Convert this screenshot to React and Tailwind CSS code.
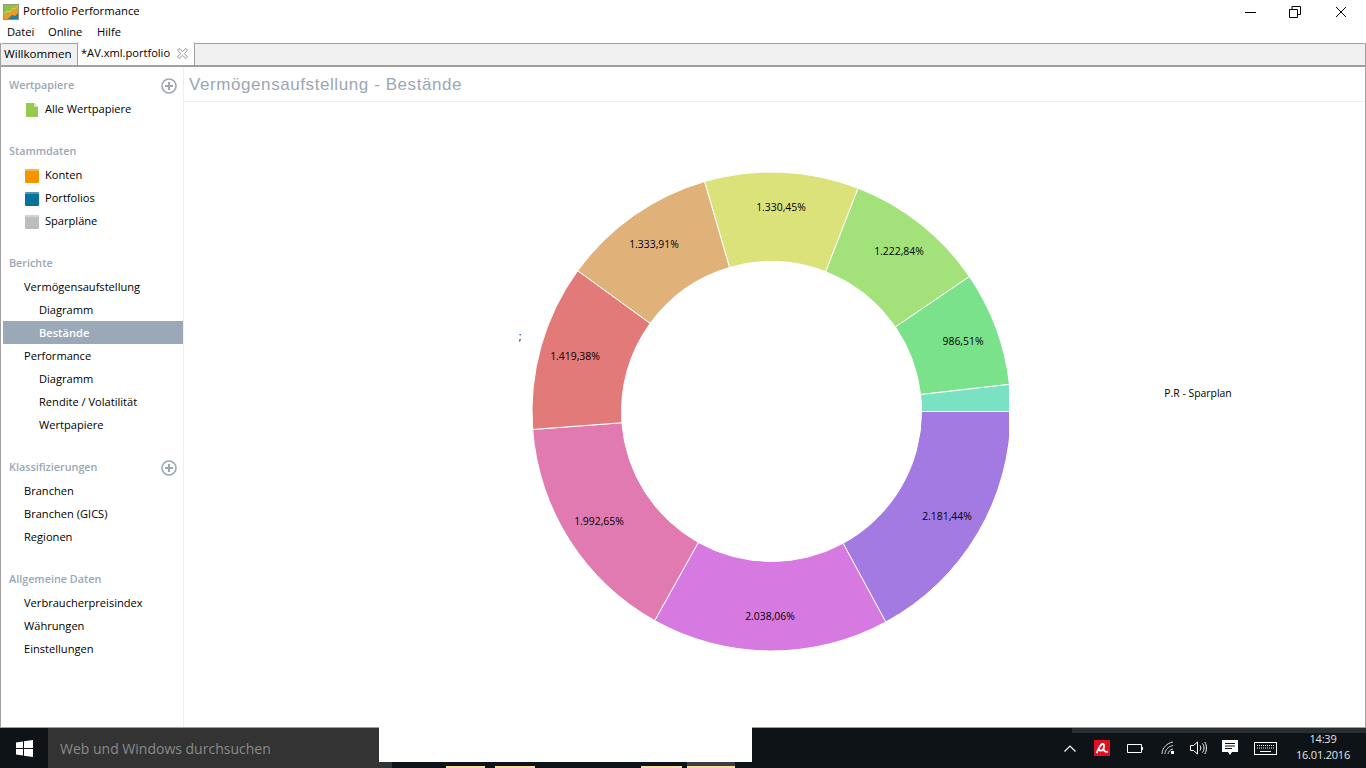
import React from "react";

const FONT = "font-['Open_Sans','Noto_Sans',sans-serif]";

function polar(r, deg) {
  const a = (deg * Math.PI) / 180;
  return [771.5 + r * Math.cos(a), 411.5 + r * Math.sin(a)];
}
function slice(a0, a1) {
  const R = 239.5, r = 150;
  const [x0, y0] = polar(R, a0), [x1, y1] = polar(R, a1), [x2, y2] = polar(r, a1), [x3, y3] = polar(r, a0);
  const large = a1 - a0 > 180 ? 1 : 0;
  return `M${x0} ${y0}A${R} ${R} 0 ${large} 1 ${x1} ${y1}L${x2} ${y2}A${r} ${r} 0 ${large} 0 ${x3} ${y3}Z`;
}
const SLICES = [
  [0, 61.5, "#a37ae2", "2.181,44%", 947, 520],
  [61.5, 119.2, "#d67ae2", "2.038,06%", 770, 620],
  [119.2, 175.7, "#e27ab2", "1.992,65%", 599, 525],
  [175.7, 216, "#e27a7a", "1.419,38%", 575, 360],
  [216, 253.8, "#e0b27a", "1.333,91%", 654, 248],
  [253.8, 291.2, "#dbe27a", "1.330,45%", 781, 211],
  [291.2, 325.7, "#a3e27a", "1.222,84%", 899, 255],
  [325.7, 353.5, "#7ae28b", "986,51%", 963, 345],
  [353.5, 360, "#7ae2c3", "", 0, 0],
];

function Donut() {
  return (
    <svg viewBox="184 102 1181 625" className="block h-full w-full">
      <defs>
        <clipPath id="chartClip">
          <rect x="184" y="102" width="825" height="625" />
        </clipPath>
      </defs>
      <g clipPath="url(#chartClip)">
        {SLICES.map((s) => (
          <path key={s[2]} d={slice(s[0], s[1])} fill={s[2]} stroke="#ffffff" strokeWidth="1" />
        ))}
      </g>
      <g fontFamily="'Open Sans','Noto Sans',sans-serif" fontSize="10.4" fill="#000000" textAnchor="middle">
        {SLICES.filter((s) => s[3]).map((s) => (
          <text key={s[3]} x={s[4]} y={s[5]}>{s[3]}</text>
        ))}
        <text x="1198" y="397">P.R - Sparplan</text>
        <text x="520" y="340">;</text>
      </g>
    </svg>
  );
}

function Doc({ color }) {
  return (
    <svg width="12" height="14" viewBox="0 0 12 14" className="ml-[1px] mr-[1px] shrink-0">
      <path d="M0 0H8L12 4V14H0Z" fill={color} />
      <path d="M8 0L12 4H8Z" fill="#d5e8a8" />
    </svg>
  );
}
function Book({ color, top }) {
  return (
    <span className="block h-[14px] w-[14px] shrink-0 rounded-[1px] border-t-2" style={{ backgroundColor: color, borderColor: top }} />
  );
}
function Plus() {
  return (
    <svg width="16" height="16" viewBox="0 0 16 16" className="shrink-0">
      <circle cx="8" cy="8" r="7" fill="none" stroke="#9aa7b5" strokeWidth="1.6" />
      <path d="M8 4V12M4 8H12" stroke="#9aa7b5" strokeWidth="2" />
    </svg>
  );
}

function Heading({ children, plus, className = "" }) {
  return (
    <div className={`mb-[1px] flex h-[23px] items-center justify-between pl-[8px] pr-[6px] ${className}`}>
      <span className="text-[10.8px] font-semibold text-[#9aa7b5]">{children}</span>
      {plus && <Plus />}
    </div>
  );
}
function Item({ children, icon, level = 1, active }) {
  const pad = icon ? "pl-[24px] gap-[6px]" : level === 2 ? "pl-[38px]" : "pl-[23px]";
  return (
    <div className={`flex h-[23px] items-center text-[11.1px] ${pad} ${active ? "-mt-[1px] mb-[1px] ml-[2px] !pl-[36px] pt-[2px] bg-[#9aa8b7] font-semibold text-white" : "text-black"}`}>
      {icon}
      <span>{children}</span>
    </div>
  );
}

function Sidebar() {
  return (
    <aside className="w-[183px] shrink-0 border-r border-[#eeeeee] pt-[7px]">
      <Heading plus>Wertpapiere</Heading>
      <Item icon={<Doc color="#95c94f" />}>Alle Wertpapiere</Item>
      <Heading className="mt-[19px]">Stammdaten</Heading>
      <Item icon={<Book color="#f79400" top="#fbb44c" />}>Konten</Item>
      <Item icon={<Book color="#05739a" top="#4a9ab8" />}>Portfolios</Item>
      <Item icon={<Book color="#bdbdbd" top="#d2d2d2" />}>Sparpläne</Item>
      <Heading className="mt-[19px]">Berichte</Heading>
      <Item>Vermögensaufstellung</Item>
      <Item level={2}>Diagramm</Item>
      <Item level={2} active>Bestände</Item>
      <Item>Performance</Item>
      <Item level={2}>Diagramm</Item>
      <Item level={2}>Rendite / Volatilität</Item>
      <Item level={2}>Wertpapiere</Item>
      <Heading plus className="mt-[19px]">Klassifizierungen</Heading>
      <Item>Branchen</Item>
      <Item>Branchen (GICS)</Item>
      <Item>Regionen</Item>
      <Heading className="mt-[19px]">Allgemeine Daten</Heading>
      <Item>Verbraucherpreisindex</Item>
      <Item>Währungen</Item>
      <Item>Einstellungen</Item>
    </aside>
  );
}

function Logo() {
  return (
    <svg width="16" height="16" viewBox="0 0 16 16" className="shrink-0">
      <rect width="16" height="16" fill="#8c9a78" />
      <rect x="1" y="1" width="14" height="14" fill="#8fc04a" />
      <path d="M1 15V11L4 8L7 9L10 5L12 6L15 2V15Z" fill="#f29a1f" />
      <path d="M5 15L9 11L12 12L15 9V15Z" fill="#1f7fa6" />
      <path d="M1 10L4 7L7 8L10 4L12 5L15 1" fill="none" stroke="#e6d24a" strokeWidth="1" />
    </svg>
  );
}

function TitleBar() {
  return (
    <div className="flex h-[22px] items-center bg-white pl-[3px] pt-[1px] text-[11.3px] text-black">
      <Logo />
      <span className="ml-[4px]">Portfolio Performance</span>
      <div className="ml-auto flex items-center">
        <svg width="12" height="12" viewBox="0 0 12 12" className="mr-[33px]"><path d="M1 6.5H12" stroke="#000" /></svg>
        <svg width="12" height="12" viewBox="0 0 12 12" className="mr-[34px]">
          <path d="M0.5 3.5H8.5V11.5H0.5ZM3 3.5V0.5H11.5V8.5H8.5" fill="none" stroke="#000" />
        </svg>
        <svg width="12" height="12" viewBox="0 0 12 12" className="mr-[19px]"><path d="M1 1L11 11M11 1L1 11" stroke="#000" /></svg>
      </div>
    </div>
  );
}

function TabBar() {
  return (
    <div className="flex h-[24px] shrink-0 items-end rounded-t-[2px] border-b-2 border-t border-[#a0a0a0] bg-[#f0f0f0] text-black">
      <div className="flex h-[22px] w-[76px] items-center pl-[3px] text-[11.6px]">Willkommen</div>
      <div className="flex h-[23px] w-[118px] items-center justify-between rounded-t-[2px] border-x border-[#a0a0a0] bg-white pl-[3px] pr-[6px] text-[11.1px]">
        <span>*AV.xml.portfolio</span>
        <svg width="11" height="11" viewBox="0 0 11 11" className="shrink-0">
          <path d="M0.5 2L2 0.5L5.5 3.5L9 0.5L10.5 2L7.5 5.5L10.5 9L9 10.5L5.5 7.5L2 10.5L0.5 9L3.5 5.5Z" fill="#ffffff" stroke="#8a8a8a" strokeWidth="0.9" />
        </svg>
      </div>
    </div>
  );
}

function Tray() {
  return (
    <div className="relative -ml-[8px] flex h-full items-center text-white">
      <svg width="12" height="7" viewBox="0 0 12 7" className="mr-[18px]"><path d="M0.5 6.5L6 1L11.5 6.5" fill="none" stroke="#fff" strokeWidth="1.2" /></svg>
      <div className="mr-[17px] flex h-[16px] w-[16px] items-center justify-center bg-[#e01021]">
        <svg width="14" height="14" viewBox="0 0 14 14"><path d="M1.5 12C3.5 8 5 3.5 7.5 3C10 2.5 9 7 8 8.5C6.5 10.5 4.5 9.5 3.5 8.5M8.5 8C9 10.5 11 11.5 13 10.5" fill="none" stroke="#fff" strokeWidth="1.8" /></svg>
      </div>
      <svg width="16" height="9" viewBox="0 0 16 9" className="mr-[18px]"><path d="M0.5 0.5H14.5V8.5H0.5ZM15.5 3V6" fill="none" stroke="#fff" /></svg>
      <svg width="14" height="14" viewBox="0 0 14 14" className="mr-[15px]">
        <path d="M1 13C1 7 6 2 12 1M4 13C4 9 7 5.5 12 4.5M7 13C7 11 9 8.5 12 8" fill="none" stroke="#d8d8d8" strokeWidth="1" />
        <rect x="10" y="10" width="3" height="3" fill="#fff" />
      </svg>
      <svg width="17" height="14" viewBox="0 0 17 14" className="mr-[15px]">
        <path d="M0.5 4.5H3.5L7.5 1V13L3.5 9.5H0.5Z" fill="none" stroke="#fff" />
        <path d="M10 4.5C11 6 11 8 10 9.5M12.5 2.5C14.5 5 14.5 9 12.5 11.5M14.8 1C17 4.5 17 9.5 14.8 13" fill="none" stroke="#fff" />
      </svg>
      <svg width="16" height="16" viewBox="0 0 16 16" className="mr-[16px]">
        <path d="M0 0H16V12H10L8 15L6 12H0Z" fill="#fff" />
        <path d="M3 3.5H13M3 6H13M3 8.5H10" stroke="#0c1116" />
      </svg>
      <svg width="23" height="13" viewBox="0 0 23 13" className="mr-[14px]">
        <rect x="0.5" y="0.5" width="22" height="12" fill="none" stroke="#fff" />
        <path d="M3 3.5H20M3 6H20" stroke="#fff" strokeDasharray="1 1" />
        <path d="M6 9.5H17" stroke="#fff" />
      </svg>
      <div className="-mt-[2px] flex w-[64px] flex-col items-center text-[11px] leading-[16px] tracking-[-0.2px] text-[#e4e4e4]">
        <span>14:39</span>
        <span>16.01.2016</span>
      </div>
    </div>
  );
}

function Taskbar() {
  return (
    <div className="relative flex h-[40px] shrink-0 bg-[#0d1317]">
      <div className="flex w-[48px] items-center justify-center">
        <svg width="17" height="17" viewBox="0 0 17 17">
          <path d="M0 2.4L7 1.4V8H0ZM8 1.3L17 0V8H8ZM0 9H7V15.6L0 14.6ZM8 9H17V17L8 15.7Z" fill="#fff" />
        </svg>
      </div>
      <div className="flex w-[344px] items-center bg-[#333333] pl-[12px] text-[14px] text-[#8a8a8a]">
        Web und Windows durchsuchen
      </div>
      <div className="relative flex-1">
        <div className="absolute bottom-0 left-[54px] h-[2px] w-[39px] bg-[#fad9a8]" />
        <div className="absolute bottom-0 left-[103px] h-[2px] w-[40px] bg-[#fad9a8]" />
        <div className="absolute bottom-0 left-[249px] h-[2px] w-[41px] bg-[#fad9a8]" />
        <div className="absolute bottom-[2px] left-[295px] h-[4px] w-[48px] bg-[#3a3d40]" />
        <div className="absolute bottom-0 left-[295px] h-[2px] w-[48px] bg-[#fad9a8]" />
      </div>
      <div className="relative w-[294px] shrink-0">
        <div className="absolute left-0 right-0 top-0 h-[5px] bg-[#2b2e30]" />
        <Tray />
      </div>
      <div className="absolute left-[379px] top-[-1px] h-[35px] w-[373px] bg-white" />
    </div>
  );
}

export default function App() {
  return (
    <div className={`flex h-[768px] w-[1366px] flex-col overflow-hidden bg-white ${FONT}`}>
      <TitleBar />
      <div className="flex h-[21px] items-center pl-[7px] text-[11.2px] text-black">
        <span className="w-[41px]">Datei</span>
        <span className="w-[49px]">Online</span>
        <span>Hilfe</span>
      </div>
      <div className="flex min-h-0 flex-1 flex-col border-x border-b border-x-[#a0a0a0] border-b-[#a0a0a0]">
        <TabBar />
        <div className="flex min-h-0 flex-1">
          <Sidebar />
          <main className="flex min-w-0 flex-1 flex-col">
            <div className="flex h-[35px] shrink-0 items-center border-b border-[#eeeeee] pl-[5px] pt-[2px] font-['Liberation_Sans',sans-serif] text-[17px] tracking-[0.58px] text-[#9aa7b5]">
              Vermögensaufstellung - Bestände
            </div>
            <div className="min-h-0 flex-1">
              <Donut />
            </div>
          </main>
        </div>
      </div>
      <Taskbar />
    </div>
  );
}
